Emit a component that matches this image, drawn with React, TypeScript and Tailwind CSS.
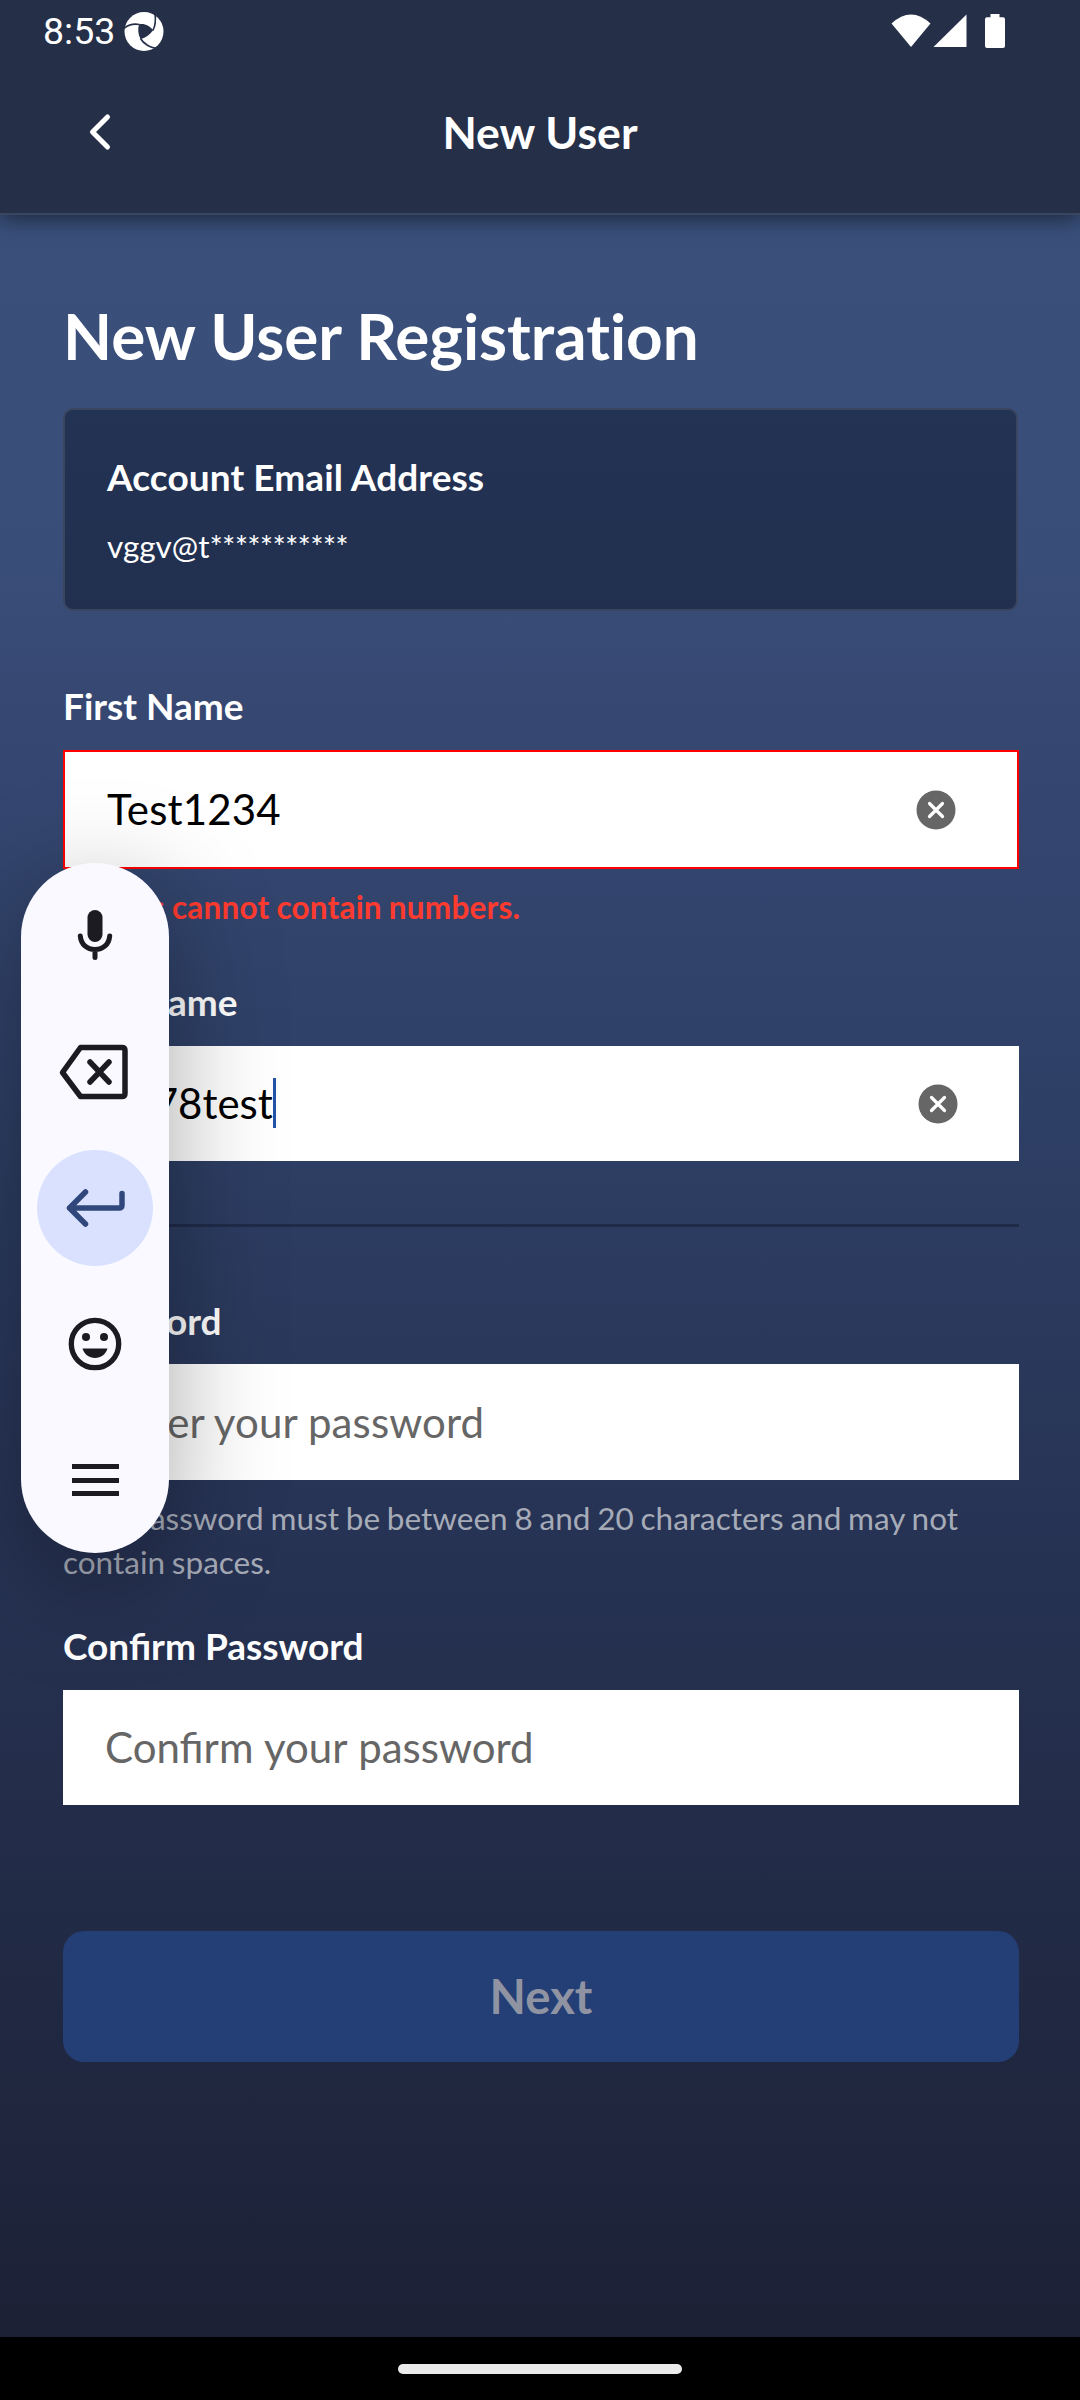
import type { ReactNode } from "react";

function StatusBar() {
  return (
    <div className="flex h-[62px] items-center pl-[43px] pr-[75px] text-white">
      <span className="h-[44px] w-[72px] whitespace-nowrap font-['Roboto'] text-[37.5px] leading-[44px]">8:53</span>
      <svg className="ml-[9px] h-[40px] w-[40px]" viewBox="0 0 40 40">
        <circle cx="20" cy="20.500" r="19.500" fill="#fff" />
        <path d="M15 13.500C20 12 26 15 29 19.500C26 23 22 27 16.500 28C14 23.500 13.700 18 15 13.500Z" fill="#252f47" />
        <g fill="none" stroke="#252f47" strokeWidth="1.600">
          <path d="M0 17.500C4 14 10 12.500 15.500 13.500" />
          <path d="M28.800 19.500C31.500 15 32 9 30.800 1" />
          <path d="M16.500 27.500C19 32 26 37.500 36 37.500" />
        </g>
      </svg>
      <div className="ml-auto flex items-start">
        <svg className="h-[34px] w-[40px]" viewBox="0 0 40 34">
          <path d="M0.500 9.500Q20-8.500 39.500 9.500L20 33Z" fill="#fff" />
        </svg>
        <svg className="ml-[2px] h-[34px] w-[34px]" viewBox="0 0 34 34">
          <path d="M33.500 0.500V33H0.500Z" fill="#fff" />
        </svg>
        <svg className="ml-[18px] h-[34px] w-[20px]" viewBox="0 0 20 34">
          <path d="M5.500 0h9v3.300H18a2 2 0 0 1 2 2V32a2 2 0 0 1-2 2H2a2 2 0 0 1-2-2V5.300a2 2 0 0 1 2-2h3.500Z" fill="#fff" />
        </svg>
      </div>
    </div>
  );
}

function Header() {
  return (
    <header className="relative h-[215px] shrink-0 border-b-2 border-[#3a4560] bg-[#252f47] shadow-[0_4px_20px_rgba(20,25,40,0.75)]">
      <StatusBar />
      <div className="grid h-[140px] grid-cols-[200px_1fr_200px] items-center">
        <svg className="ml-[88px] h-[38px] w-[24px]" viewBox="0 0 24 38" fill="none" stroke="#fff" strokeWidth="5" strokeLinecap="round" strokeLinejoin="round">
          <path d="M19.500 4L4.500 19L19.500 34" />
        </svg>
        <h1 className="text-center text-[44.600px] font-bold leading-[54px] text-white">New User</h1>
      </div>
    </header>
  );
}

function Label({ children }: { children: ReactNode }) {
  return <div className="h-[44px] whitespace-nowrap text-[37px] font-bold leading-[44px] text-white">{children}</div>;
}

function ClearIcon() {
  return (
    <svg className="h-[40px] w-[40px]" viewBox="0 0 40 40">
      <circle cx="20" cy="20" r="19.500" fill="#666" />
      <path d="M13.500 13.500L26.500 26.500M26.500 13.500L13.500 26.500" stroke="#fff" strokeWidth="3.200" strokeLinecap="round" />
    </svg>
  );
}

function KeyboardToolbar() {
  return (
    <div className="absolute left-[21px] top-[863px] h-[690px] w-[148px] rounded-full bg-[#f9f9ff] shadow-[0_26px_110px_rgba(0,0,0,0.34)]">
      <div className="flex h-full flex-col items-center pt-[14px]">
        <div className="flex h-[136px] items-center justify-center">
          <svg className="h-[52px] w-[38px] -translate-y-[10px]" viewBox="0 0 38 52" fill="none">
            <rect x="11.500" y="1" width="15" height="32" rx="7.500" fill="#1b1b21" />
            <path d="M4.300 27C5 35.500 11 40.500 19 40.500S33 35.500 33.700 27M19 41V48.500" stroke="#1b1b21" strokeWidth="5" strokeLinecap="round" />
          </svg>
        </div>
        <div className="flex h-[136px] items-center justify-center">
          <svg className="h-[58px] w-[70px] -translate-x-[1px] -translate-y-[9px]" viewBox="0 0 70 58" fill="none" stroke="#1b1b21" strokeWidth="5.500" strokeLinecap="round" strokeLinejoin="round">
            <path d="M21.500 4.500H63Q66 4.500 66 7.500V50.500Q66 53.500 63 53.500H21.500L3.500 29.500Z" />
            <path d="M31 19L50 39M50 19L31 39" />
          </svg>
        </div>
        <div className="mt-[1px] flex h-[116px] w-[116px] shrink-0 items-center justify-center rounded-full bg-[#dae1ff]">
          <svg className="h-[40px] w-[60px]" viewBox="0 0 60 40" fill="none" stroke="#30477b" strokeWidth="5.500" strokeLinecap="round" strokeLinejoin="round">
            <path d="M20.500 4L4.500 20L20.500 36M4.500 20H54Q57 20 57 17V5.500" />
          </svg>
        </div>
        <div className="mt-[1px] flex h-[154px] items-center justify-center">
          <svg className="h-[54px] w-[54px]" viewBox="0 0 54 54" fill="none">
            <circle cx="27" cy="27" r="23.700" stroke="#1b1b21" strokeWidth="5.300" />
            <circle cx="18" cy="20" r="4" fill="#1b1b21" />
            <circle cx="36" cy="20" r="4" fill="#1b1b21" />
            <path d="M14.500 31.500H39.500C37.500 37.500 33 41 27 41S16.500 37.500 14.500 31.500Z" fill="#1b1b21" />
          </svg>
        </div>
        <div className="flex h-[118px] items-center justify-center">
          <div className="flex h-[32px] w-[47px] flex-col justify-between">
            <span className="h-[5px] bg-[#1b1b21]" />
            <span className="h-[5px] bg-[#1b1b21]" />
            <span className="h-[5px] bg-[#1b1b21]" />
          </div>
        </div>
      </div>
    </div>
  );
}

export default function App() {
  return (
    <div className="relative flex h-[2400px] w-[1080px] flex-col overflow-hidden bg-[#1c2136] font-['Lato',sans-serif]">
      <Header />
      <main className="flex h-[2122px] shrink-0 flex-col bg-[linear-gradient(180deg,#3a507b_0%,#394f7a_14%,#374973_22%,#2f4168_39%,#273354_62%,#222b46_79%,#1c2136_100%)] px-[63px] pt-[83px]">
        <h2 className="h-[76px] whitespace-nowrap text-[63.800px] font-bold leading-[76px] text-white [font-variant-ligatures:none]">New User Registration</h2>

        <section className="mt-[34px] h-[203px] w-[955px] rounded-[10px] border-2 border-[#3a4560] bg-linear-to-b from-[#233354] to-[#222f4f] px-[42px] pt-[45px]">
          <div className="tracking-[0.08px]">
            <Label>Account Email Address</Label>
          </div>
          <div className="mt-[28px] h-[38px] text-[31.500px] leading-[38px] text-white">
            vggv@t<span className="tracking-[-0.8px]">***********</span>
          </div>
        </section>

        <div className="mt-[73px]">
          <Label>First Name</Label>
        </div>
        <div className="mt-[22px] flex h-[119px] w-[956px] items-center justify-between border-2 border-[#ff0000] bg-white pl-[42px] pr-[61px] text-[42px] leading-[50px] text-black">
          <span className="-mt-[2px] tracking-[0.15px]">Test1234</span>
          <ClearIcon />
        </div>
        <div className="mt-[19px] h-[38px] pl-[4px] text-[31.500px] font-bold leading-[38px] tracking-[0.2px] text-[#ff3b30] [word-spacing:-0.8px]">Names cannot contain numbers.</div>

        <div className="mt-[54px]">
          <Label>Last Name</Label>
        </div>
        <div className="mt-[22px] flex h-[115px] w-[956px] items-center bg-white pl-[42px] pr-[61px] text-[42px] leading-[50px] text-black">
          <span className="-mt-[2px]">5678test</span>
          <span className="-mt-[1px] h-[50px] w-[3px] bg-[#2553a8]" />
          <span className="ml-auto">
            <ClearIcon />
          </span>
        </div>

        <div className="mt-[63px] h-[3px] w-[956px] bg-[#1f2b49]" />

        <div className="mt-[72px]">
          <Label>Password</Label>
        </div>
        <div className="mt-[21px] flex h-[116px] w-[956px] items-center bg-white px-[42px] text-[42px] leading-[50px] text-[#666] tracking-[0.13px]">Enter your password</div>
        <p className="mt-[16px] h-[88px] w-[956px] text-[31.500px] leading-[44px] text-[#a6abb8] [word-spacing:-1.250px]">
          Your password must be between 8 and 20 characters and may not<br />contain spaces.
        </p>

        <div className="mt-[40px]">
          <Label>Confirm Password</Label>
        </div>
        <div className="mt-[22px] flex h-[115px] w-[956px] items-center bg-white px-[42px] pb-[2px] text-[42px] leading-[50px] text-[#666] [word-spacing:0.8px]">Confirm your password</div>

        <button className="mt-[126px] flex h-[131px] w-[956px] items-center justify-center rounded-[21px] bg-[#243e76] pb-[2px] text-[47.250px] font-bold leading-[56px] text-[#9094a2]">
          Next
        </button>
      </main>
      <footer className="flex h-[63px] shrink-0 items-center justify-center bg-black">
        <div className="h-[10px] w-[284px] rounded-full bg-[#ebebeb]" />
      </footer>
      <KeyboardToolbar />
    </div>
  );
}
